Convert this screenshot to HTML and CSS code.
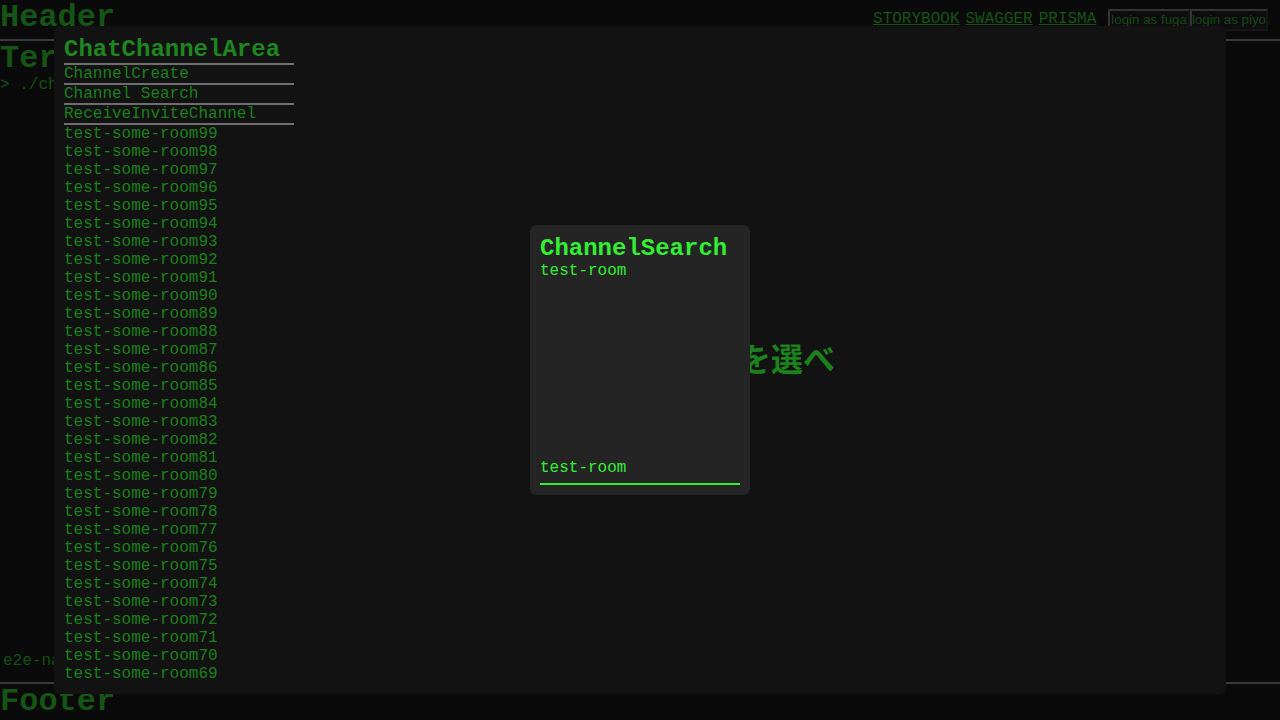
FILE: index.html
```html
<!DOCTYPE html>
<html lang="ja">
<head>
<meta charset="utf-8">
<title>Chat</title>
<link rel="stylesheet" href="styles.css">
</head>
<body>
<div class="page">
  <header class="site-header">
    <h1 class="page-title">Header</h1>
    <div class="header-right">
      <nav class="dev-links">
        <a href="#">STORYBOOK</a>
        <a href="#">SWAGGER</a>
        <a href="#">PRISMA</a>
      </nav>
      <div class="login-buttons">
        <button class="login-btn">login as fuga</button><button class="login-btn">login as piyo</button>
      </div>
    </div>
  </header>
  <main class="terminal">
    <h1 class="page-title">Terminal</h1>
    <p class="prompt">&gt; ./chat</p>
    <div class="spacer"></div>
    <p class="status">e2e-name</p>
  </main>
  <footer class="site-footer">
    <h1 class="page-title">Footer</h1>
  </footer>
</div>

<div class="modal-layer">
  <section class="chat-area">
    <aside class="channel-sidebar">
      <h2 class="sidebar-title">ChatChannelArea</h2>
      <div class="sidebar-item">ChannelCreate</div>
      <div class="sidebar-item">Channel Search</div>
      <div class="sidebar-item">ReceiveInviteChannel</div>
      <ul class="room-list">
        <li>test-some-room99</li>
        <li>test-some-room98</li>
        <li>test-some-room97</li>
        <li>test-some-room96</li>
        <li>test-some-room95</li>
        <li>test-some-room94</li>
        <li>test-some-room93</li>
        <li>test-some-room92</li>
        <li>test-some-room91</li>
        <li>test-some-room90</li>
        <li>test-some-room89</li>
        <li>test-some-room88</li>
        <li>test-some-room87</li>
        <li>test-some-room86</li>
        <li>test-some-room85</li>
        <li>test-some-room84</li>
        <li>test-some-room83</li>
        <li>test-some-room82</li>
        <li>test-some-room81</li>
        <li>test-some-room80</li>
        <li>test-some-room79</li>
        <li>test-some-room78</li>
        <li>test-some-room77</li>
        <li>test-some-room76</li>
        <li>test-some-room75</li>
        <li>test-some-room74</li>
        <li>test-some-room73</li>
        <li>test-some-room72</li>
        <li>test-some-room71</li>
        <li>test-some-room70</li>
        <li>test-some-room69</li>
      </ul>
    </aside>
    <div class="chat-main">
      <p class="empty-message">部屋を選べ</p>
    </div>
  </section>
</div>

<div class="modal-layer">
  <section class="search-dialog">
    <h2 class="search-title">ChannelSearch</h2>
    <ul class="search-results">
      <li>test-room</li>
    </ul>
    <input class="search-input" type="text" value="test-room">
  </section>
</div>
</body>
</html>
```

FILE: styles.css
```css
html, body {
  margin: 0;
  padding: 0;
  background: #0a0a0a;
  height: 100%;
}

body {
  font-family: "Liberation Mono", "Noto Sans CJK JP", monospace;
  font-size: 16px;
  color: #145014;
  overflow: hidden;
}

.page {
  display: flex;
  flex-direction: column;
  height: 720px;
}

.page-title {
  margin: 0;
  font-size: 32px;
  font-weight: bold;
  line-height: 36px;
  color: #155415;
}

.site-header {
  display: flex;
  justify-content: space-between;
  align-items: flex-start;
  height: 39px;
  border-bottom: 2px solid #3a3a3a;
  padding-right: 12px;
}

.header-right {
  display: flex;
  align-items: flex-start;
  padding-top: 9px;
}

.dev-links {
  display: flex;
  gap: 6px;
  padding-top: 1px;
}

.dev-links a {
  color: #155415;
  text-decoration: underline;
  line-height: 18px;
}

.login-buttons {
  display: flex;
  margin-left: 12px;
}

.login-btn {
  font-family: "Liberation Sans", Arial, sans-serif;
  font-size: 13.33px;
  color: #134813;
  background: #0d0d0d;
  border: 2px solid;
  border-color: #333 #151515 #151515 #333;
  padding: 1px 1px;
  line-height: 16px;
  margin: 0;
}

.login-btn + .login-btn {
  padding: 1px 0;
}

.terminal {
  flex: 1;
  display: flex;
  flex-direction: column;
}

.prompt {
  margin: -1px 0 0;
  line-height: 18px;
  color: #145014;
}

.spacer {
  flex: 1;
}

.status {
  margin: 0 0 12px 3px;
  line-height: 18px;
  color: #145014;
}

.site-footer {
  border-top: 2px solid #3a3a3a;
  height: 36px;
}

/* modal layers */
.modal-layer {
  position: fixed;
  inset: 0;
  display: flex;
  align-items: center;
  justify-content: center;
}

.chat-area {
  box-sizing: border-box;
  width: 1172px;
  height: 668px;
  padding: 10px;
  background: #121212;
  border-radius: 6px;
  display: flex;
  overflow: hidden;
  color: #1c801c;
}

.channel-sidebar {
  width: 230px;
  flex: none;
}

.sidebar-title {
  margin: 0;
  font-size: 24px;
  font-weight: bold;
  line-height: 27px;
  border-bottom: 2px solid #6e6e6e;
  color: #1f861f;
}

.sidebar-item {
  line-height: 18px;
  border-bottom: 2px solid #6e6e6e;
}

.room-list {
  list-style: none;
  margin: 0;
  padding: 0;
}

.room-list li {
  line-height: 18px;
}

.chat-main {
  flex: 1;
  display: flex;
  align-items: center;
  justify-content: center;
}

.empty-message {
  margin: 0;
  padding-bottom: 7px;
  font-family: "Noto Sans CJK JP", sans-serif;
  font-size: 32px;
  font-weight: bold;
  line-height: 40px;
  color: #1c801c;
}

.search-dialog {
  box-sizing: border-box;
  width: 220px;
  height: 270px;
  padding: 10px;
  background: #242424;
  border-radius: 6px;
  display: flex;
  flex-direction: column;
  color: #33ee33;
}

.search-title {
  margin: 0;
  font-size: 24px;
  font-weight: bold;
  line-height: 27px;
}

.search-results {
  list-style: none;
  margin: 0;
  padding: 0;
  flex: 1;
}

.search-results li {
  line-height: 18px;
}

.search-input {
  box-sizing: border-box;
  width: 100%;
  height: 34px;
  margin: 0;
  padding: 2px 0 0;
  border: none;
  border-bottom: 2px solid #33ee33;
  background: transparent;
  color: #33ee33;
  font-family: "Liberation Mono", monospace;
  font-size: 16px;
  outline: none;
}
```
